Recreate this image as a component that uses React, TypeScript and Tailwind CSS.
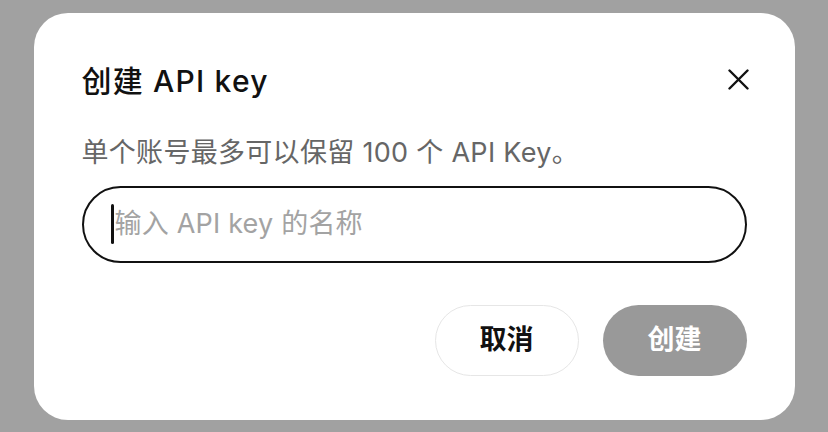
import React from "react";

const font = { fontFamily: '"Inter", "Noto Sans CJK SC", sans-serif' };

export default function App() {
    const [name, setName] = React.useState("");

    return (
        <div className="w-[828px] h-[432px] bg-[#a1a1a1] flex items-center justify-center" style={font}>
            {/* Dialog */}
            <div className="w-[761px] h-[407px] bg-white rounded-[34px] pt-12 pl-12 pr-[48px] pb-[44px] flex flex-col">
                <div className="h-10 flex items-center justify-between">
                    <h2 className="text-[30px] leading-10 font-medium text-[#111] tracking-[1.2px]">创建 API key</h2>
                    <button className="w-6 h-6 -mr-[4px] -mt-[2px] flex items-center justify-center text-[#111]">
                        <svg width="21" height="21" viewBox="0 0 21 21" fill="none">
                            <path d="M1.5 1.5L19.5 19.5M19.5 1.5L1.5 19.5" stroke="currentColor" strokeWidth="2.4" strokeLinecap="round" />
                        </svg>
                    </button>
                </div>

                <p className="mt-9 h-8 leading-8 text-[27px] text-[#666] tracking-[0.3px]">
                    单个账号最多可以保留 100 个 API Key。
                </p>

                <div className="mt-[17px] h-[77px] border-2 border-[#111] rounded-full flex items-center pl-[27px] pr-6">
                    <span className="w-[3px] h-10 bg-[#111] rounded-sm shrink-0" />
                    <input
                        type="text"
                        value={name}
                        onChange={e => setName(e.target.value)}
                        placeholder="输入 API key 的名称"
                        className="flex-1 min-w-0 ml-[1px] bg-transparent text-[27px] tracking-[0.2px] text-[#111] placeholder:text-[#a3a3a3] focus:outline-none"
                        style={font}
                    />
                </div>

                <div className="mt-[42px] flex justify-end gap-6">
                    <button className="w-[144px] h-[71px] rounded-full border-[1.5px] border-[#e6e6e6] bg-white text-[27px] font-semibold text-[#111]">
                        取消
                    </button>
                    <button
                        disabled={!name}
                        className="w-[144px] h-[71px] rounded-full bg-[#999999] text-[27px] font-semibold text-white"
                    >
                        创建
                    </button>
                </div>
            </div>
        </div>
    );
}
